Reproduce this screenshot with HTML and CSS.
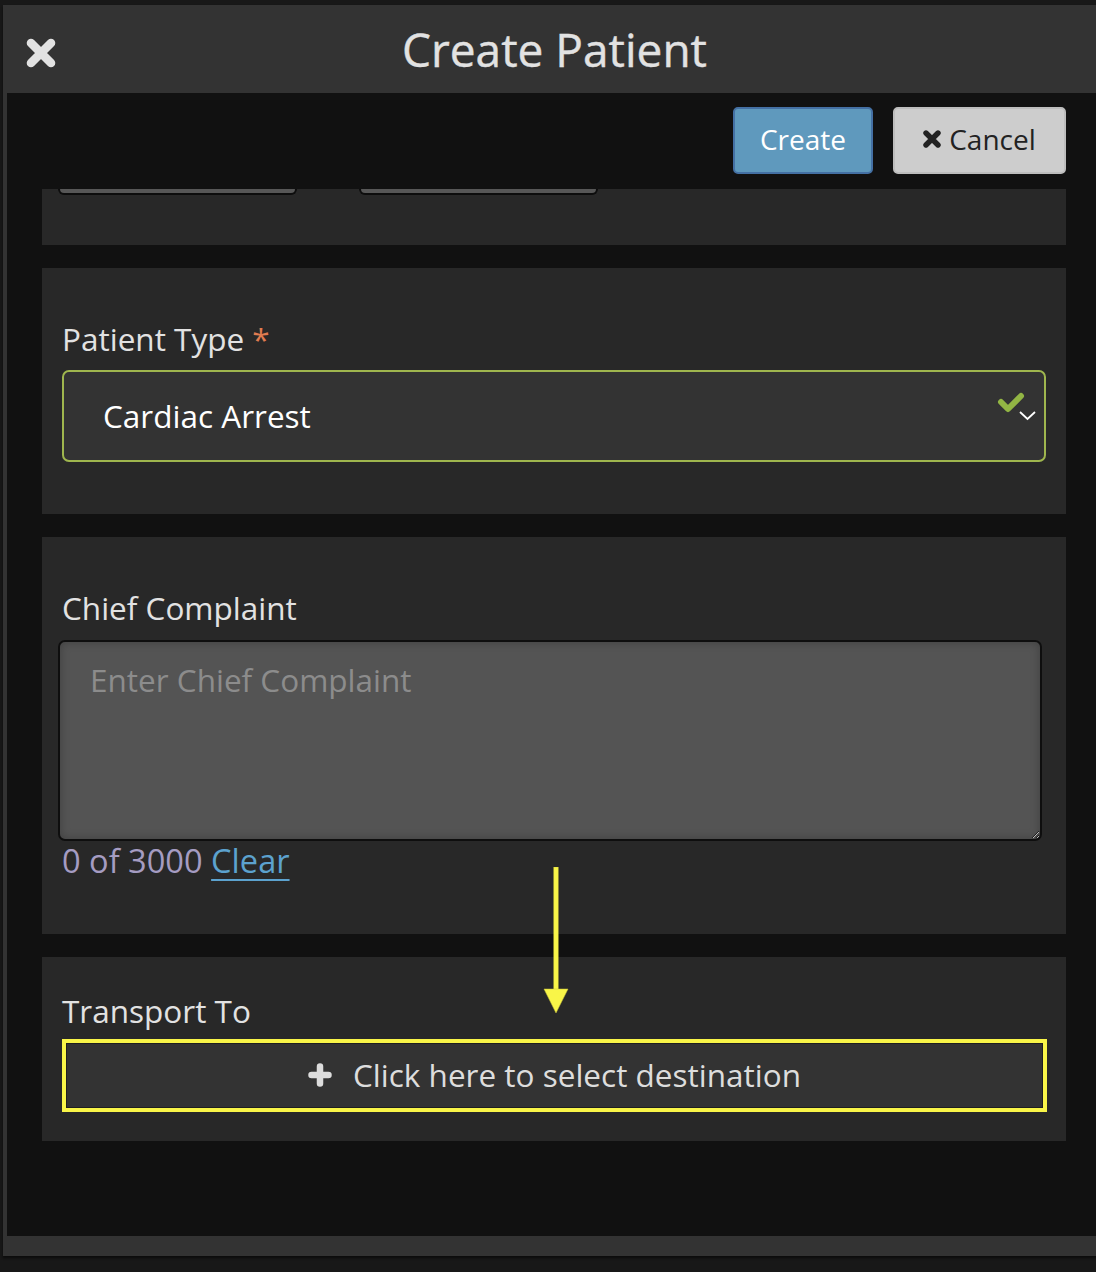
FILE: index.html
```html
<!DOCTYPE html>
<html lang="en">
<head>
<meta charset="utf-8">
<title>Create Patient</title>
<link rel="stylesheet" href="styles.css">
</head>
<body>
<div class="modal">
  <header class="modal-header">
    <button class="close-btn" aria-label="Close">
      <svg class="close-icon" viewBox="0 0 30 30" width="30" height="30"><path d="M5 5 L25 25 M25 5 L5 25" /></svg>
    </button>
    <h1 class="modal-title">Create Patient</h1>
    <div class="header-spacer"></div>
  </header>
  <div class="modal-content">
    <div class="toolbar">
      <button class="btn btn-create">Create</button>
      <button class="btn btn-cancel">
        <svg class="cancel-icon" viewBox="0 0 30 30" width="18" height="18"><path d="M5 5 L25 25 M25 5 L5 25" /></svg>
        Cancel
      </button>
    </div>
    <div class="panels">
      <section class="panel panel-partial">
        <div class="stub"></div>
        <div class="stub"></div>
      </section>
      <section class="panel panel-type">
        <label class="field-label">Patient Type <span class="required">*</span></label>
        <div class="select-box">
          <span class="select-value">Cardiac Arrest</span>
          <svg class="select-icons" viewBox="0 0 40 30" width="40" height="30">
            <polyline class="check" points="4,10 11,17 24,4" />
            <polyline class="chev" points="23,20 30.5,27 38,20" />
          </svg>
        </div>
      </section>
      <section class="panel panel-complaint">
        <label class="field-label">Chief Complaint</label>
        <textarea class="complaint" placeholder="Enter Chief Complaint"></textarea>
        <div class="counter">0 of 3000 <a class="clear-link" href="#">Clear</a></div>
      </section>
      <section class="panel panel-transport">
        <label class="field-label">Transport To</label>
        <button class="dest-btn">
          <svg class="plus-icon" viewBox="0 0 24 24" width="24" height="24"><path d="M12 3.5 V20.5 M3.5 12 H20.5" /></svg>
          <span>Click here to select destination</span>
        </button>
      </section>
    </div>
    <svg class="annot-arrow" viewBox="0 0 26 148" width="26" height="148">
      <rect x="10.8" y="0" width="4.4" height="126" />
      <polygon points="1,122 25,122 13,146" />
    </svg>
  </div>
</div>
</body>
</html>
```
FILE: styles.css
```css
* { box-sizing: border-box; }

html, body {
  margin: 0;
  padding: 0;
}

body {
  background: #181818;
  overflow: hidden;
  width: 1096px;
  height: 1272px;
  font-family: "Open Sans", "DejaVu Sans", sans-serif;
  color: #e2e2e2;
}

.modal {
  margin: 5px 0 0 3px;
  width: 1103px;
  background: #333333;
  padding: 0 4px 20px 4px;
  box-shadow: 0 2px 2px #0c0c0c;
}

.modal-header {
  height: 88px;
  display: grid;
  grid-template-columns: 1fr auto 1fr;
  align-items: center;
  padding: 0 19px;
}

.close-btn {
  background: none;
  border: 0;
  padding: 0;
  width: 30px;
  height: 30px;
  justify-self: start;
  margin-top: 8px;
}

.close-icon path {
  stroke: #e2e2e2;
  stroke-width: 8.6;
  stroke-linecap: round;
  fill: none;
}

.modal-title {
  margin: 0;
  font-size: 46px;
  font-weight: 400;
  color: #e2e2e2;
  line-height: 62px;
  -webkit-text-stroke: 0.4px #e2e2e2;
}

.modal-content {
  position: relative;
  background: #111111;
  height: 1143px;
  overflow: hidden;
}

.toolbar {
  height: 96px;
  display: flex;
  justify-content: flex-end;
  align-items: center;
  gap: 20px;
  padding-right: 36px;
  padding-bottom: 1px;
}

.btn {
  height: 67px;
  border-radius: 5px;
  font-family: "Open Sans", "DejaVu Sans", sans-serif;
  font-size: 28px;
  display: flex;
  align-items: center;
  justify-content: center;
  gap: 8px;
  padding: 0 0 3px 0;
}

.btn-create {
  width: 140px;
  background: #5f99bd;
  border: 2px solid #4470a4;
  color: #ffffff;
}

.btn-cancel {
  width: 173px;
  background: #cdcdcd;
  border: 2px solid #bdbdbd;
  color: #222222;
}

.cancel-icon path {
  stroke: #222222;
  stroke-width: 9;
  stroke-linecap: round;
  fill: none;
}

.panels {
  display: flex;
  flex-direction: column;
  gap: 23px;
  padding: 0 36px 0 35px;
}

.panel {
  background: #282828;
  padding: 0 20px;
}

.panel-partial {
  height: 56px;
  display: flex;
  gap: 62px;
  padding-left: 16px;
}

.stub {
  width: 239px;
  height: 6px;
  background: #575757;
  border: 2px solid #0d0d0d;
  border-top: 0;
  border-radius: 0 0 7px 7px;
}

.field-label {
  display: block;
  font-size: 31.5px;
  line-height: 44px;
  color: #e2e2e2;
}

.required {
  color: #e07c50;
}

.panel-type {
  padding-top: 49px;
  padding-bottom: 52px;
}

.select-box {
  margin-top: 9px;
  height: 92px;
  border: 2px solid #9fb64e;
  border-radius: 7px;
  background: #333333;
  display: flex;
  align-items: center;
  padding-left: 39px;
  padding-right: 7px;
}

.select-value {
  font-size: 31.5px;
  line-height: 44px;
  color: #ffffff;
  flex: 1;
}

.select-icons {
  margin-bottom: 18px;
  margin-top: 0;
}

.check {
  fill: none;
  stroke: #92b544;
  stroke-width: 6;
  stroke-linecap: round;
  stroke-linejoin: round;
}

.chev {
  fill: none;
  stroke: #ffffff;
  stroke-width: 1.8;
}

.panel-complaint {
  padding-top: 49px;
  padding-bottom: 55px;
}

.complaint {
  display: block;
  margin: 10px 0 0 -4px;
  width: 984px;
  height: 201px;
  background: #545454;
  border: 2px solid #0e0e0e;
  border-radius: 7px;
  box-shadow: inset 0 0 10px rgba(0, 0, 0, 0.25);
  padding: 16px 30px;
  font-family: "Open Sans", "DejaVu Sans", sans-serif;
  font-size: 31.5px;
  line-height: 44px;
  color: #e2e2e2;
  resize: both;
}

.complaint::placeholder {
  color: #8c8c8c;
}

.counter {
  margin-top: 2px;
  font-size: 32.6px;
  line-height: 36px;
  color: #a59cc2;
}

.clear-link {
  color: #5ca2ce;
  text-decoration: underline;
  text-decoration-thickness: 2px;
  text-underline-offset: 6px;
}

.panel-transport {
  padding-top: 32px;
  padding-bottom: 29px;
}

.dest-btn {
  margin-top: 6px;
  width: 985px;
  height: 73px;
  background: #333333;
  border: 4px solid #f9f548;
  box-shadow: inset 0 0 0 1px #1f1f1f;
  display: flex;
  align-items: center;
  justify-content: center;
  gap: 21px;
  font-family: "Open Sans", "DejaVu Sans", sans-serif;
  font-size: 31.5px;
  color: #dddddd;
  padding: 0 0 2px 0;
}

.plus-icon path {
  stroke: #dddddd;
  stroke-width: 6.5;
  stroke-linecap: round;
  fill: none;
}

.annot-arrow {
  position: absolute;
  left: 536px;
  top: 774px;
}

.annot-arrow rect,
.annot-arrow polygon {
  fill: #f9f548;
  stroke: #c9c53a;
  stroke-width: 0.5;
}
```
